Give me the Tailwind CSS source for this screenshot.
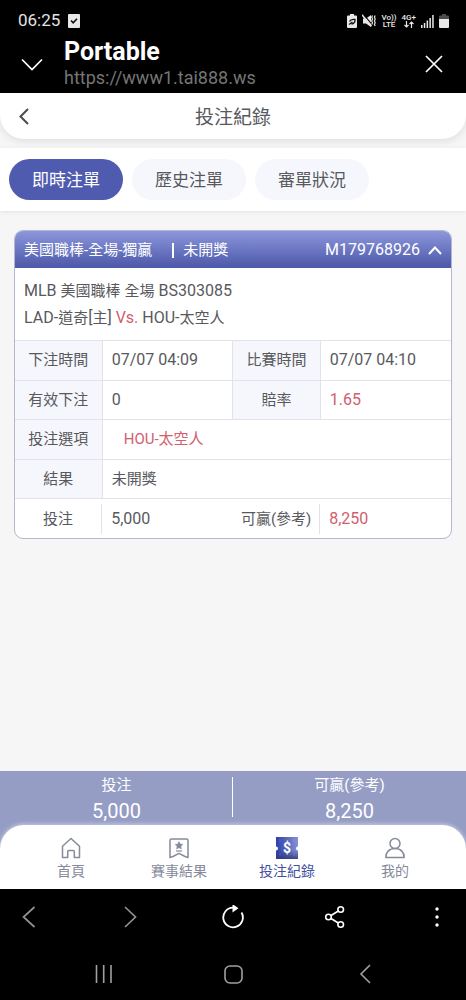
<!DOCTYPE html>
<html lang="zh-Hant">
<head>
    <meta charset="UTF-8">
    <meta name="viewport" content="width=device-width, initial-scale=1.0">
    <title>投注紀錄</title>
    <!-- Tailwind CSS -->
    <script src="https://cdn.jsdelivr.net/npm/@tailwindcss/browser@4"></script>
</head>
<body class="flex flex-col min-h-screen bg-[#f6f6f6] text-[#58595d] text-[15px] font-['Roboto','Noto_Sans_CJK_TC',sans-serif]">

    <!-- Phone status bar and browser title -->
    <div class="bg-black text-white">
        <div class="flex items-center justify-between h-10 pt-[2px] pl-[18px] pr-[17px]">
            <div class="flex items-center gap-2">
                <span class="text-[17px] text-[#e4e4e4]">06:25</span>
                <svg class="w-3 h-[14px]" viewBox="0 0 12 14">
                    <rect width="12" height="14" rx="1" fill="#e8e8e8"/>
                    <path d="M3 6.5l2.2 2.3L9 4.8" fill="none" stroke="#111" stroke-width="1.6"/>
                </svg>
            </div>
            <div class="flex items-center gap-[5px] text-[#e8e8e8]">
                <svg class="w-[10px] h-[14px]" viewBox="0 0 10 14">
                    <path d="M3 0h4v1.5h2a1 1 0 0 1 1 1V13a1 1 0 0 1-1 1H1a1 1 0 0 1-1-1V2.5a1 1 0 0 1 1-1h2z" fill="currentColor"/>
                    <path d="M2.5 7.500C3.500 5.500 5.500 5 8 5.500c.2 2.500-1 4.500-3.500 4.500M2 10.500l3.500-2.500" fill="none" stroke="#111" stroke-width="1.300"/>
                </svg>
                <svg class="w-[14px] h-[14px]" viewBox="0 0 14 14">
                    <path d="M1 4.500h3L9 1v12L4 9.500H1z" fill="currentColor"/>
                    <path d="M1.200 .2l8.500 10" stroke="#000" stroke-width="1.200"/>
                    <path d="M0 .8l9.500 11.400" stroke="currentColor" stroke-width="1.400"/>
                    <path d="M10.500 1.500l-.8 1.800.8 1.800-.8 1.800.8 1.800-.8 1.800M13.200 1.500l-.8 1.800.8 1.800-.8 1.800.8 1.800-.8 1.800.8 1.500" fill="none" stroke="currentColor" stroke-width="1.200"/>
                </svg>
                <span class="flex flex-col items-center text-[8px] leading-[7px] font-medium"><span>Vo))</span><span>LTE</span></span>
                <span class="flex flex-col items-center text-[8px] leading-[7px] font-medium">
                    <span>4G+</span>
                    <svg class="w-[10px] h-[7px]" viewBox="0 0 10 7" fill="none" stroke="currentColor" stroke-width="1.200"><path d="M2.500 0v6M.5 4l2 2 2-2M7.500 7V1M5.500 3l2-2 2 2"/></svg>
                </span>
                <svg class="w-[13px] h-[13px]" viewBox="0 0 13 13" fill="currentColor">
                    <path d="M0 10h1.500v3H0zM2.800 8h1.500v5H2.800zM5.600 5.500h1.500V13H5.600zM8.400 3h1.500v10H8.400zM11.200 0h1.500v13h-1.500z"/>
                </svg>
                <svg class="w-[10px] h-[14px]" viewBox="0 0 10 14">
                    <path d="M3 0h4v1.500h2a1 1 0 0 1 1 1V5H0V2.500a1 1 0 0 1 1-1h2z" fill="#4c4c4c"/>
                    <path d="M0 5h10v8a1 1 0 0 1-1 1H1a1 1 0 0 1-1-1z" fill="currentColor"/>
                </svg>
            </div>
        </div>
        <div class="flex items-center h-[53px] px-5 pb-[6px]">
            <button type="button" aria-label="Minimize" class="w-6 h-6">
                <svg class="w-6 h-6" viewBox="0 0 24 24" fill="none" stroke="#fff" stroke-width="1.700"><path d="M2 7.500l10 10 10-10"/></svg>
            </button>
            <div class="flex-1 ml-5">
                <div class="text-[25px] leading-7 font-bold">Portable</div>
                <div class="text-lg leading-6 text-[#757575]">https://www1.tai888.ws</div>
            </div>
            <button type="button" aria-label="Close" class="w-6 h-6">
                <svg class="w-6 h-6" viewBox="0 0 24 24" fill="none" stroke="#fff" stroke-width="1.700"><path d="M4 4l16 16M20 4L4 20"/></svg>
            </button>
        </div>
    </div>

    <!-- Page header -->
    <header class="grid grid-cols-[24px_1fr_24px] items-center h-[46px] px-3 bg-white rounded-b-3xl shadow-[0_2px_8px_rgba(0,0,0,0.1)]">
        <button type="button" aria-label="返回" class="w-6 h-6">
            <svg class="w-6 h-6" viewBox="0 0 24 24" fill="none" stroke="#4b4b4f" stroke-width="2"><path d="M16 5l-7.500 7.500L16 20"/></svg>
        </button>
        <h1 class="pt-1 text-[19px] text-center">投注紀錄</h1>
    </header>

    <!-- Tabs -->
    <div class="flex items-center gap-[9px] mt-[9px] h-[63px] px-[9px] bg-white text-[17px] shadow-[0_1px_4px_rgba(0,0,0,0.08)]">
        <button type="button" class="h-[41px] px-[23px] pt-[2px] rounded-full bg-[#4f5bae] text-white">即時注單</button>
        <button type="button" class="h-[41px] px-[23px] pt-[2px] rounded-full bg-[#f6f7fc]">歷史注單</button>
        <button type="button" class="h-[41px] px-[23px] pt-[2px] rounded-full bg-[#f6f7fc]">審單狀況</button>
    </div>

    <main class="flex-1 px-[14px] pt-[19px]">
        <section class="rounded-[9px] border border-[#b3b7cf] bg-white overflow-hidden">
            <button type="button" class="flex items-center w-full h-[37px] pt-px pl-[9px] pr-2 bg-linear-to-b from-[#8d97dc] to-[#4c58a8] text-white">
                <span>美國職棒-全場-獨贏</span>
                <span class="w-[2px] h-[15px] ml-5 mr-[9px] bg-white"></span>
                <span>未開獎</span>
                <span class="ml-auto mr-[7px] text-base">M179768926</span>
                <svg class="w-4 h-4" viewBox="0 0 16 16" fill="none" stroke="currentColor" stroke-width="2"><path d="M2 12l6-6.500 6 6.500"/></svg>
            </button>
            <div class="px-[9px] pt-[9px] pb-[9px] text-base leading-[27px]">
                <p>MLB <span class="text-[15px] leading-none">美國職棒</span> <span class="text-[15px] leading-none">全場</span> BS303085</p>
                <p>LAD-<span class="text-[15px] leading-none">道奇</span>[<span class="text-[15px] leading-none">主</span>] <span class="text-[#d0606d]">Vs.</span> HOU-<span class="text-[15px] leading-none">太空人</span></p>
            </div>
            <table class="w-full h-[198px] table-fixed border-collapse text-left">
                <tbody>
                    <tr class="h-[39px] border-t border-[#e2e3ea]">
                        <th scope="row" class="w-1/5 border-r border-[#e2e3ea] bg-[#f6f7fc] font-normal text-center">下注時間</th>
                        <td class="w-3/10 border-r border-[#e2e3ea] pl-[9px] text-base">07/07 04:09</td>
                        <th scope="row" class="w-1/5 border-r border-[#e2e3ea] bg-[#f6f7fc] font-normal text-center">比賽時間</th>
                        <td class="w-3/10 pl-[9px] text-base">07/07 04:10</td>
                    </tr>
                    <tr class="h-[39px] border-t border-[#e2e3ea]">
                        <th scope="row" class="border-r border-[#e2e3ea] bg-[#f6f7fc] font-normal text-center">有效下注</th>
                        <td class="border-r border-[#e2e3ea] pl-[9px] text-base">0</td>
                        <th scope="row" class="border-r border-[#e2e3ea] bg-[#f6f7fc] font-normal text-center">賠率</th>
                        <td class="pl-[9px] text-base text-[#d0606d]">1.65</td>
                    </tr>
                    <tr class="h-[39px] border-t border-[#e2e3ea]">
                        <th scope="row" class="border-r border-[#e2e3ea] bg-[#f6f7fc] font-normal text-center">投注選項</th>
                        <td colspan="3" class="pl-[21px] text-[#d0606d]">HOU-太空人</td>
                    </tr>
                    <tr class="h-[39px] border-t border-[#e2e3ea]">
                        <th scope="row" class="border-r border-[#e2e3ea] bg-[#f6f7fc] font-normal text-center">結果</th>
                        <td colspan="3" class="pl-[9px]">未開獎</td>
                    </tr>
                    <tr class="h-[39px] border-t border-[#e2e3ea]">
                        <th scope="row" class="font-normal text-center"><div class="border-r border-[#e2e3ea] leading-[30px]">投注</div></th>
                        <td class="pl-[9px] text-base">5,000</td>
                        <th scope="row" class="font-normal text-center"><div class="border-r border-[#e2e3ea] leading-[30px]">可贏(參考)</div></th>
                        <td class="pl-[9px] text-base text-[#d0606d]">8,250</td>
                    </tr>
                </tbody>
            </table>
        </section>
    </main>

    <!-- Totals and bottom navigation -->
    <footer class="bg-[#959dc5]">
        <dl class="grid grid-cols-2 h-[54px] pt-[2px] text-center text-white">
            <div>
                <dt class="leading-6">投注</dt>
                <dd class="text-xl leading-7">5,000</dd>
            </div>
            <div class="relative">
                <dt class="leading-6">可贏(參考)</dt>
                <dd class="text-xl leading-7">8,250</dd>
                <span class="absolute left-[-1px] top-1 w-px h-10 bg-white"></span>
            </div>
        </dl>
        <nav class="grid grid-cols-4 h-16 px-[17px] pt-3 bg-white rounded-t-3xl shadow-[0_-1px_4px_rgba(255,255,255,0.5)] text-sm text-[#858a9c]">
            <a href="#" class="flex flex-col items-center gap-[2px]">
                <svg class="w-[22px] h-[22px]" viewBox="0 0 22 22" fill="none" stroke="currentColor" stroke-width="1.500" stroke-linejoin="round"><path d="M2.500 9.300L11 1.500l8.500 7.800V20.500h-5.200v-6a1 1 0 0 0-1-1H8.700a1 1 0 0 0-1 1v6H2.500z"/></svg>
                <span>首頁</span>
            </a>
            <a href="#" class="flex flex-col items-center gap-[2px]">
                <svg class="w-[22px] h-[22px]" viewBox="0 0 22 22" fill="none" stroke="currentColor" stroke-width="1.500" stroke-linejoin="round">
                    <path d="M2 3.500a1.500 1.500 0 0 1 1.500-1.500h15A1.500 1.500 0 0 1 20 3.500v17l-3-1-6-3.200-6 3.200-3 1z"/>
                    <path d="M11 4.500l1.200 2.500 2.700.4-2 1.900.5 2.700L11 10.700 8.600 12l.5-2.700-2-1.900 2.700-.4z" fill="currentColor" stroke-width=".5"/>
                    <path d="M8 14h6" stroke-width="1.200"/>
                </svg>
                <span>賽事結果</span>
            </a>
            <a href="#" aria-current="page" class="flex flex-col items-center gap-[2px] text-[#4350a0]">
                <svg class="w-[22px] h-[22px]" viewBox="0 0 22 22">
                    <defs>
                        <linearGradient id="ticket" x1="0" y1="0" x2="1" y2="0">
                            <stop offset="0" stop-color="#2f40a8"/>
                            <stop offset="1" stop-color="#8590d6"/>
                        </linearGradient>
                        <linearGradient id="shade" x1="0" y1="0" x2="0" y2="1">
                            <stop offset=".6" stop-color="#2c3878" stop-opacity="0"/>
                            <stop offset="1" stop-color="#2c3878" stop-opacity=".8"/>
                        </linearGradient>
                    </defs>
                    <path d="M0 0h22v9.500a2 2 0 0 0 0 4V22H0v-8.500a2 2 0 0 0 0-4z" fill="url(#ticket)"/>
                    <path d="M0 0h22v9.500a2 2 0 0 0 0 4V22H0v-8.500a2 2 0 0 0 0-4z" fill="url(#shade)"/>
                    <path d="M4 2v3M4 16v3M18 2v3M18 16v3" stroke="#fff" stroke-opacity=".15"/>
                    <text x="11" y="16" text-anchor="middle" font-size="14" font-weight="700" fill="#fff">$</text>
                </svg>
                <span>投注紀錄</span>
            </a>
            <a href="#" class="flex flex-col items-center gap-[2px]">
                <svg class="w-[22px] h-[22px]" viewBox="0 0 22 22" fill="none" stroke="currentColor" stroke-width="1.500" stroke-linejoin="round"><circle cx="11" cy="6.500" r="5"/><path d="M1.800 20.500c0-5 3.200-9 9.200-9s9.200 4 9.200 9z"/></svg>
                <span>我的</span>
            </a>
        </nav>
    </footer>

    <!-- Browser toolbar and system navigation -->
    <div class="h-[111px] bg-black text-white">
        <div class="flex items-center justify-between h-14 px-[17px]">
            <button type="button" aria-label="Back" class="w-6 h-6"><svg class="w-6 h-6" viewBox="0 0 24 24" fill="none" stroke="#929292" stroke-width="1.700"><path d="M17.500 2L6.500 12l11 10"/></svg></button>
            <button type="button" aria-label="Forward" class="w-6 h-6"><svg class="w-6 h-6" viewBox="0 0 24 24" fill="none" stroke="#929292" stroke-width="1.700"><path d="M6 2l10.500 10L6 22"/></svg></button>
            <button type="button" aria-label="Reload" class="w-6 h-6">
                <svg class="w-6 h-6" viewBox="0 0 24 24">
                    <path d="M20.500 7.500A9.800 9.800 0 1 1 12 2.700" fill="none" stroke="#fff" stroke-width="1.800"/>
                    <path d="M11.500 -1l6 4.300-6 4.200z" fill="#fff"/>
                </svg>
            </button>
            <button type="button" aria-label="Share" class="w-6 h-6">
                <svg class="w-6 h-6" viewBox="0 0 24 24" fill="none" stroke="#fff" stroke-width="1.600">
                    <circle cx="5.500" cy="12" r="2.800"/><circle cx="17.700" cy="4.500" r="2.800"/><circle cx="17.700" cy="19.500" r="2.800"/>
                    <path d="M8 10.500L15.300 6M8 13.500l7.300 4.500"/>
                </svg>
            </button>
            <button type="button" aria-label="More" class="w-6 h-6"><svg class="w-6 h-6" viewBox="0 0 24 24" fill="#fff"><circle cx="12" cy="4" r="1.700"/><circle cx="12" cy="12" r="1.700"/><circle cx="12" cy="20" r="1.700"/></svg></button>
        </div>
        <div class="grid grid-cols-3 justify-items-center px-[38px] pt-[17px]">
            <button type="button" aria-label="Recent apps" class="w-6 h-6"><svg class="w-6 h-6" viewBox="0 0 24 24" fill="none" stroke="#a0a0a0" stroke-width="1.600"><path d="M5.500 3v18M12.700 3v18M20 3v18"/></svg></button>
            <button type="button" aria-label="Home" class="w-6 h-6"><svg class="w-6 h-6" viewBox="0 0 24 24" fill="none" stroke="#a0a0a0" stroke-width="1.600"><rect x="4" y="4" width="17" height="17" rx="5"/></svg></button>
            <button type="button" aria-label="System back" class="w-6 h-6"><svg class="w-6 h-6" viewBox="0 0 24 24" fill="none" stroke="#a0a0a0" stroke-width="1.600"><path d="M19 3l-9 9 9 9"/></svg></button>
        </div>
    </div>
</body>
</html>
